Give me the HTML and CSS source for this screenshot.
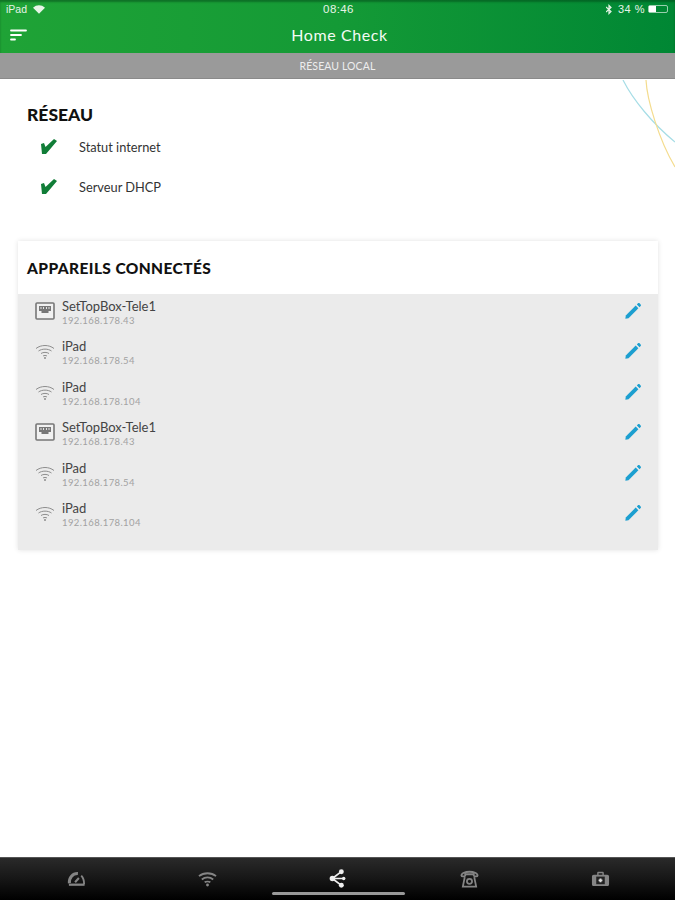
FILE: index.html
```html
<!DOCTYPE html>
<html lang="fr">
<head>
<meta charset="utf-8">
<title>Home Check</title>
<link rel="stylesheet" href="styles.css">
</head>
<body>
<div class="screen">
  <svg class="deco" width="60" height="100" viewBox="0 0 60 100" fill="none">
    <path d="M8 0C18 20 38 44 60 62" stroke="#a6dde6" stroke-width="1.2"/>
    <path d="M31 0C32 20 44 60 60 87" stroke="#f4dc8e" stroke-width="1.2"/>
  </svg>
  <header class="appbar">
    <div class="status">
      <div class="status-left"><span>iPad</span>
        <svg width="12" height="9" viewBox="0 0 14 10"><path d="M7 10L0 3C4-.8 10-.8 14 3Z" fill="#e6f4e6"/></svg>
      </div>
      <span class="status-time">08:46</span>
      <div class="status-right">
        <svg class="bt" width="6" height="11" viewBox="0 0 6 11" fill="none" stroke="#e6f4e6" stroke-width="1.200"><path d="M0 3L5 7.500L3 9.500V1.500L5 3.500L0 8"/></svg>
        <span>34 %</span>
        <span class="battery"><span class="battery-fill"></span></span>
      </div>
    </div>
    <div class="titlebar">
      <svg class="menu" width="17" height="12" viewBox="0 0 17 12"><path d="M1 1.500H16M1 6H11M1 10.500H5" stroke="#fff" stroke-width="1.800" stroke-linecap="round"/></svg>
      <h1>Home Check</h1>
    </div>
  </header>
  <div class="subbar">RÉSEAU LOCAL</div>

  <section class="network">
    <h2>RÉSEAU</h2>
    <div class="check-row"><svg class="tick" viewBox="0 0 17 15"><use href="#check"/></svg><span>Statut internet</span></div>
    <div class="check-row"><svg class="tick" viewBox="0 0 17 15"><use href="#check"/></svg><span>Serveur DHCP</span></div>
  </section>

  <section class="card">
    <h2 class="card-title">APPAREILS CONNECTÉS</h2>
    <div class="devices">
      <div class="device">
        <svg class="dev-icon" viewBox="0 0 20 20"><use href="#lan"/></svg>
        <div class="dev-text"><div class="dev-name">SetTopBox-Tele1</div><div class="dev-ip">192.168.178.43</div></div>
        <svg class="edit" viewBox="0 0 20 20"><use href="#pen"/></svg>
      </div>
      <div class="device">
        <svg class="dev-icon" viewBox="0 0 20 20"><use href="#wifi"/></svg>
        <div class="dev-text"><div class="dev-name">iPad</div><div class="dev-ip">192.168.178.54</div></div>
        <svg class="edit" viewBox="0 0 20 20"><use href="#pen"/></svg>
      </div>
      <div class="device">
        <svg class="dev-icon" viewBox="0 0 20 20"><use href="#wifi"/></svg>
        <div class="dev-text"><div class="dev-name">iPad</div><div class="dev-ip">192.168.178.104</div></div>
        <svg class="edit" viewBox="0 0 20 20"><use href="#pen"/></svg>
      </div>
      <div class="device">
        <svg class="dev-icon" viewBox="0 0 20 20"><use href="#lan"/></svg>
        <div class="dev-text"><div class="dev-name">SetTopBox-Tele1</div><div class="dev-ip">192.168.178.43</div></div>
        <svg class="edit" viewBox="0 0 20 20"><use href="#pen"/></svg>
      </div>
      <div class="device">
        <svg class="dev-icon" viewBox="0 0 20 20"><use href="#wifi"/></svg>
        <div class="dev-text"><div class="dev-name">iPad</div><div class="dev-ip">192.168.178.54</div></div>
        <svg class="edit" viewBox="0 0 20 20"><use href="#pen"/></svg>
      </div>
      <div class="device">
        <svg class="dev-icon" viewBox="0 0 20 20"><use href="#wifi"/></svg>
        <div class="dev-text"><div class="dev-name">iPad</div><div class="dev-ip">192.168.178.104</div></div>
        <svg class="edit" viewBox="0 0 20 20"><use href="#pen"/></svg>
      </div>
    </div>
  </section>

  <div class="spacer"></div>

  <nav class="tabbar">
    <svg class="tab" viewBox="0 0 20 20" fill="none" stroke="#858585"><path d="M2.500 15C2 9 6 4.500 11.500 4.800" stroke-width="3.200"/><path d="M15 7C17 9 18 12 18 16" stroke-width="2"/><path d="M2 16.500H18.500" stroke-width="2.400"/><path d="M8.500 14L12.500 9.500" stroke-width="2.200"/></svg>
    <svg class="tab" viewBox="0 0 20 20" fill="none" stroke="#858585" stroke-width="1.900"><path d="M1 7.500C6 3.500 14 3.500 19 7.500"/><path d="M4 11C7.500 8.200 12.500 8.200 16 11"/><path d="M7 14C8.500 13 11.500 13 13 14"/><circle cx="10" cy="16.800" r="1.500" fill="#858585" stroke="none"/></svg>
    <svg class="tab" viewBox="0 0 20 20" fill="#eee"><circle cx="3.500" cy="10" r="2.800"/><circle cx="13" cy="2.800" r="2.600"/><circle cx="13" cy="17.200" r="2.600"/><circle cx="15.500" cy="10" r="1.800"/><path d="M3.500 10L13 2.800M3.500 10H15.500M3.500 10L13 17.200" stroke="#eee" stroke-width="1.800"/></svg>
    <svg class="tab" viewBox="0 0 20 20" fill="none" stroke="#858585" stroke-width="1.900"><path d="M1.500 7C1 1.500 19 1.500 18.500 7C18.400 8 15 8 14.500 7V5.500H5.500V7C5 8 1.600 8 1.500 7Z"/><path d="M5 8.500L3 18.500H17L15 8.500"/><circle cx="10" cy="13" r="2.700"/></svg>
    <svg class="tab" viewBox="0 0 20 20"><path d="M3 6H6.500V4.500C6.500 3.500 7 3 8 3H12C13 3 13.500 3.500 13.500 4.500V6H17C18.200 6 19 6.800 19 8V16C19 17.200 18.200 18 17 18H3C1.800 18 1 17.200 1 16V8C1 6.800 1.800 6 3 6ZM8 6H12V4.500H8Z" fill="#858585" fill-rule="evenodd"/><rect x="5.500" y="8" width="9" height="8" fill="#222"/><path d="M9 10H11V11H12V13H11V14H9V13H8V11H9Z" fill="#ddd"/></svg>
    <span class="home-indicator"></span>
  </nav>
</div>

<svg class="defs" width="0" height="0">
  <defs>
    <path id="check" d="M1 5L4 4L5.500 8L14 0L17 2L6 15H2Z" fill="#107d37"/>
    <g id="lan"><rect x="1" y="2" width="18" height="16" rx="1" fill="#f1f1f1" stroke="#777" stroke-width="1.600"/><path d="M4 5H16V10H13.500V12H6.500V10H4Z" fill="#777"/><path d="M6 6V8M8.500 6V8M11.500 6V8M14 6V8" stroke="#eee" stroke-width=".9"/></g>
    <g id="wifi" fill="none" stroke="#8d8d8d" stroke-width="1"><path d="M1 7.500C6 3.500 14 3.500 19 7.500"/><path d="M3.500 10C7 7.500 13 7.500 16.500 10"/><path d="M6 12.500C8 11 12 11 14 12.500"/><path d="M8 15C9 14.300 11 14.300 12 15"/><circle cx="10" cy="17" r="1" fill="#8d8d8d" stroke="none"/></g>
    <g id="pen" fill="#1c9fd0"><path d="M2 15L13 4L16 7L5 18L1.500 18.500Z"/><path d="M14.300 2.700L15.500 1.500C16 1 16.800 1 17.300 1.500L18.500 2.700C19 3.200 19 4 18.500 4.500L17.300 5.700Z"/></g>
  </defs>
</svg>
</body>
</html>
```

FILE: styles.css
```css
* { box-sizing: border-box; }
html, body { margin: 0; padding: 0; }
body { font-family: "Open Sans", "Liberation Sans", sans-serif; background: #fff; color: #222; }

.screen { position: relative; width: 675px; height: 900px; display: flex; flex-direction: column; overflow: hidden; background: #fff; }
.defs { position: absolute; }
.deco { position: absolute; top: 80px; right: 0; }

.appbar { height: 53px; background: linear-gradient(90deg, #1fa336 0%, #149a36 50%, #008734 100%); color: #fff; display: flex; flex-direction: column; box-shadow: inset 0 2px 2px rgba(0,60,20,.45); }
.status { height: 18px; padding: 0 7px 0 6px; display: grid; grid-template-columns: 1fr auto 1fr; align-items: center; font-family: "Liberation Sans", sans-serif; font-size: 10.500px; color: #e6f4e6; }
.status-left { display: flex; align-items: center; gap: 6px; }
.status-right { display: flex; align-items: center; justify-content: flex-end; gap: 3px; font-size: 11px; letter-spacing: .5px; }
.status-time { margin-left: 3px; font-size: 11.500px; letter-spacing: .4px; }
.bt { margin-right: 3px; }
.battery { width: 20px; height: 8px; border: 1px solid rgba(255,255,255,.6); border-radius: 2px; display: block; }
.battery-fill { display: block; width: 7px; height: 100%; background: #fff; }

.titlebar { flex: 1; position: relative; display: flex; align-items: center; justify-content: center; padding: 0 0 3px 4px; }
.menu { position: absolute; left: 10px; top: 11px; }
.titlebar h1 { margin: 0; font-family: Lato, sans-serif; font-size: 16px; font-weight: 400; letter-spacing: .6px; color: #f4fbf4; }

.subbar { height: 26px; background: #9a9a9a; border-bottom: 1px solid #8a8a8a; color: #eee; font-family: Lato, sans-serif; font-size: 10.500px; letter-spacing: .1px; display: flex; align-items: center; justify-content: center; }

.network { height: 162px; padding: 25px 27px 0; }
.network h2 { margin: 0 0 13px; font-family: Lato, sans-serif; font-size: 17.500px; line-height: 22px; font-weight: 900; color: #111; }
.check-row { height: 40px; padding-left: 13px; display: flex; align-items: flex-start; font-family: Lato, sans-serif; font-size: 12.800px; color: #333; line-height: 17px; }
.tick { width: 17px; height: 15px; margin-right: 22px; flex: none; }

.card { margin: 0 17px 0 18px; background: #ebebeb; box-shadow: 0 0 5px rgba(0,0,0,.12); }
.card-title { margin: 0; height: 53px; padding: 17px 9px 0; background: #fff; font-family: Lato, sans-serif; font-size: 15.500px; line-height: 20px; font-weight: 900; color: #111; letter-spacing: .4px; }
.devices { padding: 3px 0 11px; display: flex; flex-direction: column; }
.device { height: 40.400px; display: flex; align-items: flex-start; padding: 2px 16px 0 17px; }
.dev-icon { width: 20px; height: 20px; margin-top: 2px; flex: none; }
.dev-text { flex: 1; margin-left: 7px; }
.dev-name { font-family: Lato, sans-serif; font-size: 13px; line-height: 15px; color: #444; }
.dev-ip { margin-top: 1px; font-family: Lato, sans-serif; font-size: 9.500px; line-height: 12px; color: #a2a2a2; letter-spacing: .4px; }
.edit { width: 18px; height: 18px; margin-top: 3px; flex: none; }

.spacer { flex: 1; }

.tabbar { position: relative; height: 43px; background: linear-gradient(180deg, #2a2a2a 0%, #161616 50%, #000 100%); border-top: 1px solid #555; display: grid; grid-template-columns: repeat(5, 1fr); justify-items: center; padding: 11px 9px 0 11px; }
.tab { width: 19px; height: 19px; }
.home-indicator { position: absolute; left: 272px; top: 34px; width: 133px; height: 3px; background: #999; border-radius: 2px; }
```
